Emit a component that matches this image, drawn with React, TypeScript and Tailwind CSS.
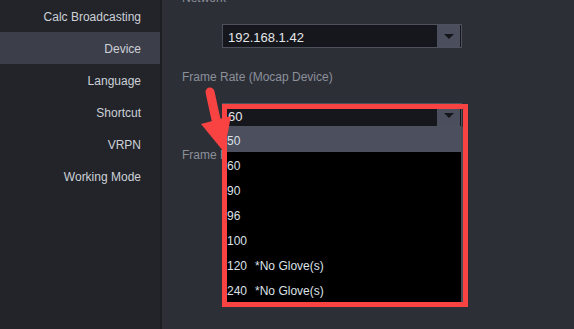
import React from "react";

const menu = ["Calc Broadcasting", "Device", "Language", "Shortcut", "VRPN", "Working Mode"];
const rates = ["50", "60", "90", "96", "100", "120", "240"];

function Caret() {
  return (
    <div className="w-[23px] h-[22px] mr-[1px] bg-[#4a4e5d] flex items-center justify-center">
      <div className="w-0 h-0 border-l-[5px] border-r-[5px] border-t-[5px] border-l-transparent border-r-transparent border-t-[#15161b]" />
    </div>
  );
}

function Select({ value }: { value: string }) {
  return (
    <div className="w-[240px] h-[24px] border border-[#4d515c] bg-[#16171c] flex items-center justify-between">
      <span className="pl-[5px] pt-[3px] text-[13px] text-[#e4e6ea]">{value}</span>
      <Caret />
    </div>
  );
}

export default function App() {
  return (
    <div className="w-[574px] h-[329px] overflow-hidden flex bg-[#2d2f37] font-['Liberation_Sans',Arial,sans-serif]">
      <aside className="w-[162px] shrink-0 bg-[#222429] border-r-2 border-[#1c1e22] flex flex-col">
        {menu.map((m) => (
          <div
            key={m}
            className={`h-[32px] flex items-center justify-end pr-[19px] pt-[2px] text-[12px] text-[#cdd1d8] ${
              m === "Device" ? "bg-[#3c3f4a]" : ""
            }`}
          >
            {m}
          </div>
        ))}
      </aside>

      <main className="relative flex-1 pl-[20px] flex flex-col">
        <div className="-mt-[10px] h-[16px] leading-[16px] text-[12px] text-[#8b9099]">Network</div>
        <div className="mt-[18px] ml-[40px]">
          <Select value="192.168.1.42" />
        </div>

        <div className="mt-[21px] h-[16px] leading-[16px] text-[12px] text-[#8b9099]">Frame Rate (Mocap Device)</div>
        <div className="relative mt-[18px] ml-[40px] w-[240px]">
          <Select value="60" />

          <div className="absolute left-0 top-[24px] w-[241px] bg-black border-r-2 border-[#4a4d56] z-10">
            {rates.map((r, i) => (
              <div
                key={r}
                className={`h-[25px] flex items-center pl-[5px] pt-[3px] text-[12px] text-[#dde1e8] ${
                  i === 0 ? "bg-[#4b4f5e]" : ""
                }`}
              >
                <span>{r}</span>
                {(r === "120" || r === "240") && <span className="ml-[8px]">*No Glove(s)</span>}
              </div>
            ))}
          </div>

          <div className="absolute left-0 top-[1px] w-[246px] h-[203px] border-[5px] border-[#f94343] z-20" />
        </div>

        <div className="mt-[20px] h-[16px] leading-[16px] text-[12px] text-[#8b9099]">Frame Rate (Hand)</div>

        <svg className="absolute left-0 top-0 z-30 pointer-events-none" width="412" height="329" viewBox="162 0 412 329">
          <line x1="210" y1="92" x2="217" y2="124" stroke="#f94343" strokeWidth="9" strokeLinecap="round" />
          <polygon points="201,124 231,116 224,152" fill="#f94343" />
        </svg>
      </main>
    </div>
  );
}
